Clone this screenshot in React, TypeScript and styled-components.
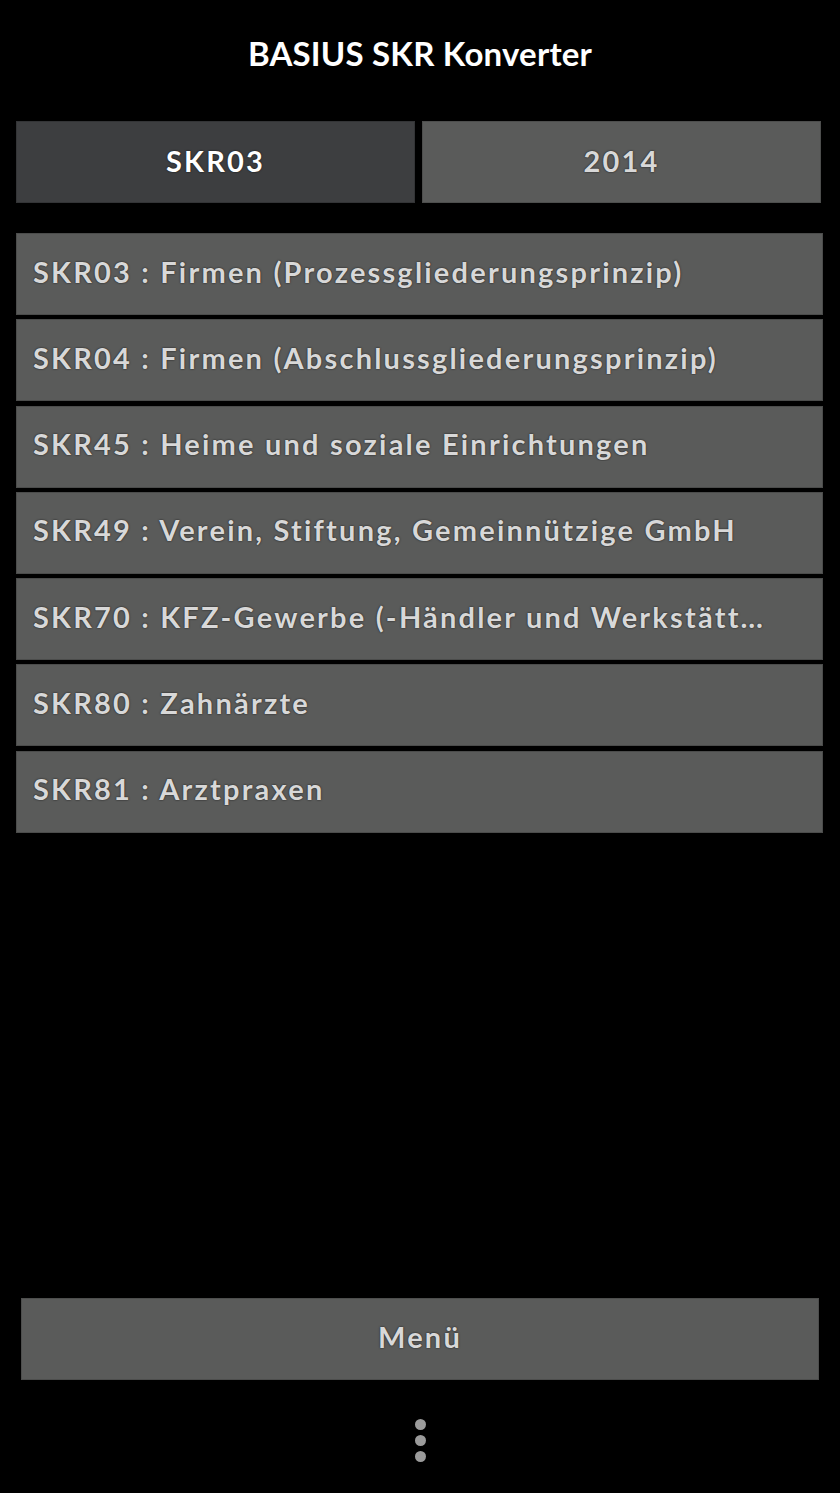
import React from 'react';
import styled, {createGlobalStyle} from 'styled-components';

const GlobalStyle = createGlobalStyle`
  html, body {
    margin: 0;
    padding: 0;
    background: #000;
  }
  body {
    font-family: Lato, "Liberation Sans", sans-serif;
  }
`;

const Screen = styled.div`
  display: flex;
  flex-direction: column;
  min-height: 1493px;
  background: #000;
`;

const Title = styled.h1`
  margin: 0;
  padding-top: 34px;
  font-size: 33px;
  line-height: 38px;
  font-weight: 700;
  color: #fff;
  text-align: center;
  letter-spacing: 0.2px;
`;

const Tabs = styled.div`
  display: grid;
  grid-template-columns: 1fr 1fr;
  gap: 7px;
  margin: 49px 19px 0 16px;
`;

const Tab = styled.div<{ $active?: boolean }>`
  height: 82px;
  box-sizing: border-box;
  display: flex;
  align-items: center;
  justify-content: center;
  padding-bottom: 4px;
  background: ${p => (p.$active ? '#3d3e40' : '#5a5b5a')};
  border: 1px solid ${p => (p.$active ? '#333436' : '#4d4e4d')};
  color: ${p => (p.$active ? '#fff' : '#d8d8d8')};
  font-size: 29px;
  font-weight: 700;
  letter-spacing: 2.2px;
  text-shadow: 0 0 2px rgba(0, 0, 0, 0.8);
`;

const List = styled.div`
  display: flex;
  flex-direction: column;
  gap: 4.3px;
  margin: 30px 17px 0 16px;
`;

const Item = styled.div`
  height: 82px;
  box-sizing: border-box;
  display: flex;
  align-items: center;
  padding: 0 58px 6px 16px;
  background: #5a5b5a;
  border: 1px solid #4b4c4b;
  color: #d8d8d8;
  font-size: 29px;
  font-weight: 700;
  letter-spacing: 2.2px;
  text-shadow: 0 0 2px rgba(0, 0, 0, 0.8);
`;

const ItemText = styled.span`
  white-space: nowrap;
  overflow: hidden;
  text-overflow: ellipsis;
`;

const Spacer = styled.div`
  flex: 1;
`;

const MenuButton = styled.div`
  height: 82px;
  box-sizing: border-box;
  margin: 0 21px 0 21px;
  display: flex;
  align-items: center;
  justify-content: center;
  padding-bottom: 6px;
  background: #5a5b5a;
  border: 1px solid #4d4e4d;
  color: #d8d8d8;
  font-size: 29px;
  font-weight: 700;
  letter-spacing: 2.2px;
  text-shadow: 0 0 2px rgba(0, 0, 0, 0.8);
`;

const Overflow = styled.div`
  display: flex;
  flex-direction: column;
  align-items: center;
  gap: 5px;
  padding: 39px 0 31px 0;
`;

const Dot = styled.span`
  width: 11px;
  height: 11px;
  border-radius: 50%;
  background: #9b9b9b;
`;

const entries: string[] = [
  'SKR03 : Firmen (Prozessgliederungsprinzip)',
  'SKR04 : Firmen (Abschlussgliederungsprinzip)',
  'SKR45 : Heime und soziale Einrichtungen',
  'SKR49 : Verein, Stiftung, Gemeinnützige GmbH',
  'SKR70 : KFZ-Gewerbe (-Händler und Werkstätten)',
  'SKR80 : Zahnärzte',
  'SKR81 : Arztpraxen',
];

export default function App() {
  return (
    <Screen>
      <GlobalStyle />
      <Title>BASIUS SKR Konverter</Title>
      <Tabs>
        <Tab $active>SKR03</Tab>
        <Tab>2014</Tab>
      </Tabs>
      <List>
        {entries.map(text => (
          <Item key={text}>
            <ItemText>{text}</ItemText>
          </Item>
        ))}
      </List>
      <Spacer />
      <MenuButton>Menü</MenuButton>
      <Overflow>
        <Dot />
        <Dot />
        <Dot />
      </Overflow>
    </Screen>
  );
}
